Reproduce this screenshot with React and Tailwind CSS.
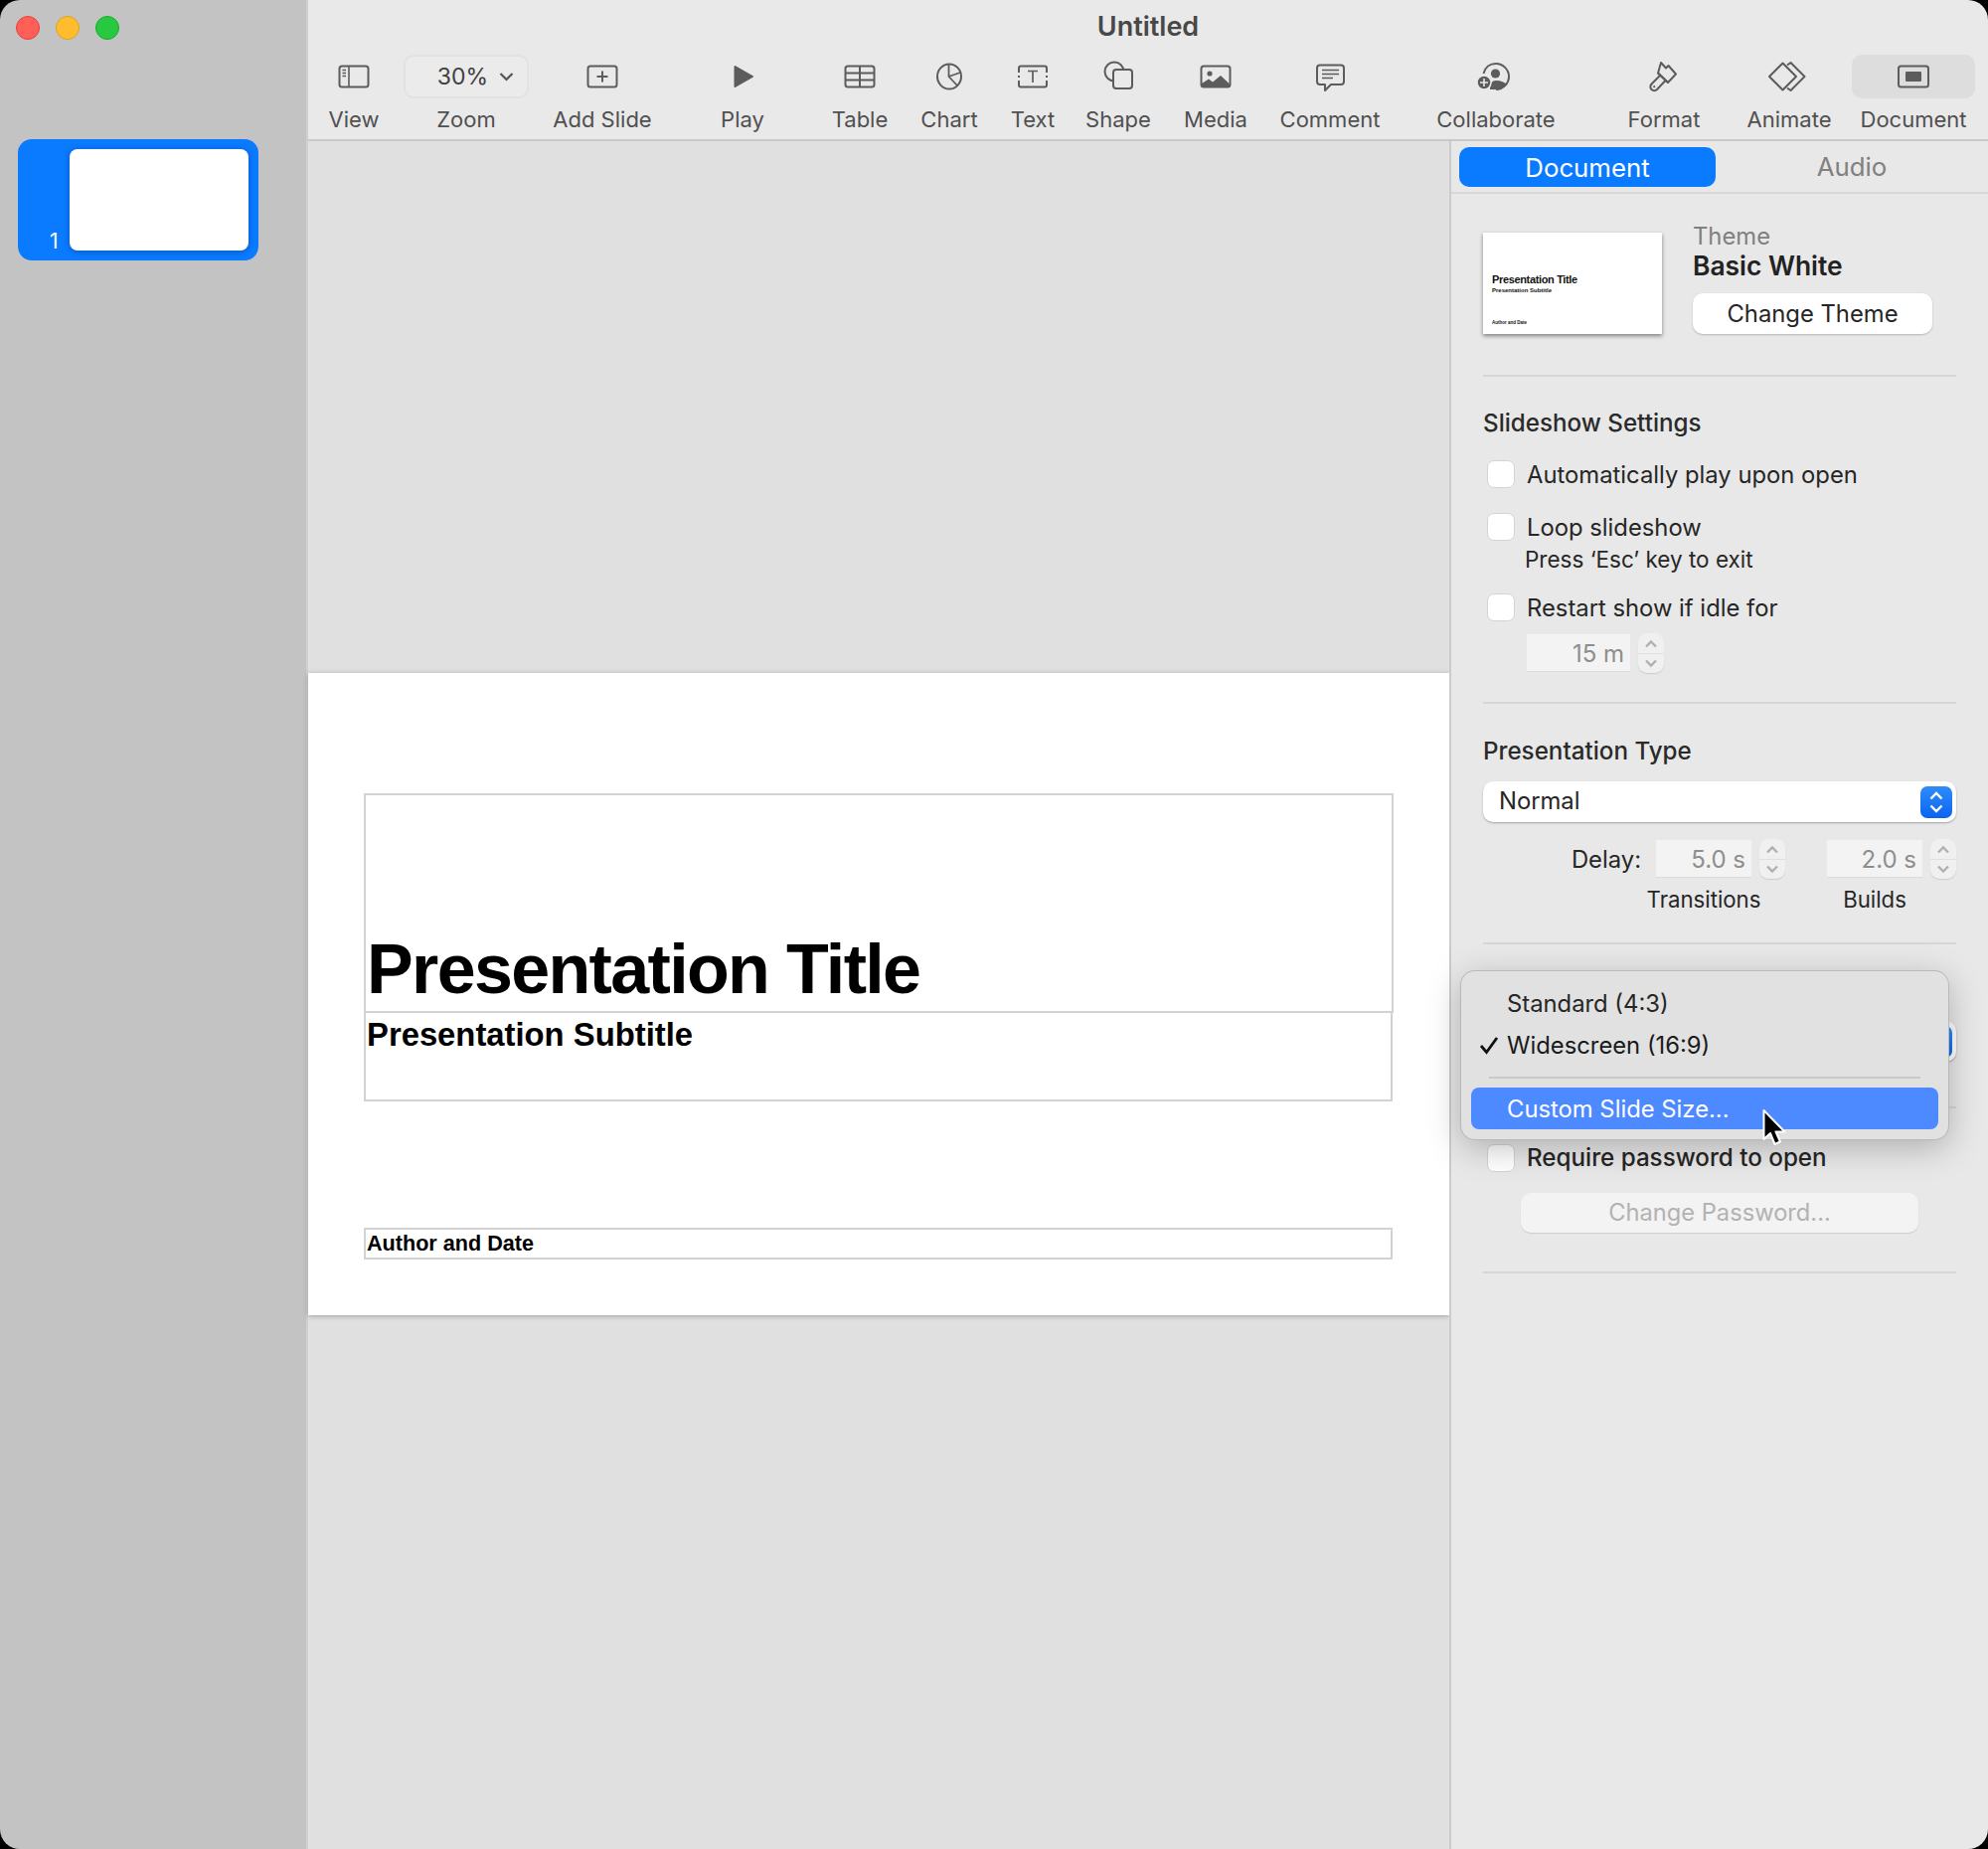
const ICON = '#5c5c5c';

const Rect = (props) => <rect x="7.5" y="11.5" width="29" height="21" rx="2.5" fill="none" stroke={ICON} strokeWidth="2" {...props} />;

const icons = {
  view: (
    <>
      <Rect />
      <path d="M17 11.5V32.5M10.5 15.5H14M10.5 18.5H14M10.5 21.5H14" stroke={ICON} strokeWidth="1.6" />
    </>
  ),
  add: (
    <>
      <Rect />
      <path d="M22 16.5V27.5M16.5 22H27.5" stroke={ICON} strokeWidth="2" />
    </>
  ),
  play: <path d="M14.5 12L32 22L14.5 32Z" fill={ICON} stroke={ICON} strokeWidth="2" strokeLinejoin="round" />,
  table: (
    <>
      <Rect />
      <path d="M7.5 18.5H36.5M7.5 25.5H36.5M22 11.5V32.5" stroke={ICON} strokeWidth="2" />
    </>
  ),
  chart: (
    <>
      <ellipse cx="22" cy="22" rx="12" ry="12.5" fill="none" stroke={ICON} strokeWidth="2" />
      <path d="M21.5 10V22L30 31M21.5 22L33 18" fill="none" stroke={ICON} strokeWidth="1.8" />
    </>
  ),
  text: (
    <>
      <path d="M8 18V13.5Q8 11.5 10 11.5H34Q36 11.5 36 13.5V18M8 26V30.5Q8 32.5 10 32.5H34Q36 32.5 36 30.5V26M8 21V23M36 21V23" fill="none" stroke={ICON} strokeWidth="2" />
      <path d="M17 16.5H27M22 16.5V28" fill="none" stroke={ICON} strokeWidth="1.7" />
    </>
  ),
  shape: (
    <>
      <circle cx="18" cy="17" r="9.5" fill="none" stroke={ICON} strokeWidth="2" />
      <rect x="17" y="15" width="19" height="19" rx="3" fill="#e9e9e9" stroke={ICON} strokeWidth="2" />
    </>
  ),
  media: (
    <>
      <rect x="7.5" y="11.5" width="29" height="21" rx="2.5" fill="none" stroke={ICON} strokeWidth="2" />
      <circle cx="16" cy="19" r="2.6" fill={ICON} />
      <path d="M8 31V29L15 24.5L19 27.5L27 21L36 29.5V32H8Z" fill={ICON} />
    </>
  ),
  comment: (
    <>
      <path d="M12 10.5H33Q36 10.5 36 13.5V27Q36 30 33 30H23L17 36V30H12Q9 30 9 27V13.5Q9 10.5 12 10.5Z" fill="none" stroke={ICON} strokeWidth="2" strokeLinejoin="round" />
      <path d="M14 15.5H31M14 19.5H31M14 23.5H25" stroke={ICON} strokeWidth="1.6" />
    </>
  ),
  collaborate: (
    <>
      <path d="M9.5 19C11 12.5 16 9 22 9C29 9 35 15 35 22C35 29 29 35 22 35" fill="none" stroke={ICON} strokeWidth="2" />
      <circle cx="21.5" cy="19" r="4.6" fill={ICON} />
      <path d="M16 35C16 29 18 26 22 26C27 26 31 28 33 30C30 34 26 35 22 35Z" fill={ICON} />
      <circle cx="10" cy="28" r="7" fill={ICON} stroke="#e9e9e9" strokeWidth="1.5" />
      <path d="M10 24V32M6 28H14" stroke="#e9e9e9" strokeWidth="1.6" />
    </>
  ),
  format: (
    <>
      <path d="M19 8L24 13.5L26.5 11L34 19.5L26 28L16 18.5Z" fill="none" stroke={ICON} strokeWidth="2" strokeLinejoin="round" />
      <path d="M18 21L9.5 29.5A3.8 3.8 0 1 0 15 35L23.5 26M16 18.5L26 28" fill="none" stroke={ICON} strokeWidth="2" />
      <circle cx="12.2" cy="32.2" r="1.1" fill={ICON} />
    </>
  ),
  animate: (
    <>
      <path d="M15.5 8.5L29 22L15.5 35.5L2 22Z" fill="none" stroke={ICON} strokeWidth="2" strokeLinejoin="round" />
      <path d="M20 10.5L23.5 8L37.5 22L23.5 36L20 33.5" fill="none" stroke={ICON} strokeWidth="2" strokeLinejoin="round" />
    </>
  ),
  document: (
    <>
      <Rect x="7" width="30" />
      <rect x="14" y="17" width="16" height="10" rx="1" fill={ICON} />
    </>
  ),
};

const toolbar = [
  { label: 'View', icon: 'view', width: 'w-[92px]' },
  { label: 'Zoom', zoom: true, width: 'w-[134px]' },
  { label: 'Add Slide', icon: 'add', width: 'w-[140px]' },
  { label: 'Play', icon: 'play', width: 'w-[142px]' },
  { label: 'Table', icon: 'table', width: 'w-[94px]' },
  { label: 'Chart', icon: 'chart', width: 'w-[86px]' },
  { label: 'Text', icon: 'text', width: 'w-[82px]' },
  { label: 'Shape', icon: 'shape', width: 'w-[90px]' },
  { label: 'Media', icon: 'media', width: 'w-[106px]' },
  { label: 'Comment', icon: 'comment', width: 'w-[124px]' },
  { label: 'Collaborate', icon: 'collaborate', width: 'w-[210px]' },
  { label: 'Format', icon: 'format', width: 'w-[128px]' },
  { label: 'Animate', icon: 'animate', width: 'w-[124px]' },
  { label: 'Document', icon: 'document', width: 'w-[126px]', active: true },
];

const ToolbarItem = ({ item }) => (
  <div className={`${item.width} flex shrink-0 flex-col items-center`}>
    {item.zoom ? (
      <div className="flex h-[44px] w-[126px] items-center justify-end rounded-[10px] border-2 border-[#e2e2e2] bg-[#ebebeb] pr-[13px]">
        <span className="text-[23px] text-[#404040]">30%</span>
        <svg className="ml-[11px]" width="15" height="10" viewBox="0 0 15 10">
          <path d="M1.5 2L7.5 8L13.5 2" fill="none" stroke="#555555" strokeWidth="2.2" />
        </svg>
      </div>
    ) : (
      <div className={`flex h-[44px] items-center justify-center rounded-[10px] ${item.active ? 'w-[124px] bg-[#dddddd]' : 'w-[44px]'}`}>
        <svg width="44" height="44" viewBox="0 0 44 44">{icons[item.icon]}</svg>
      </div>
    )}
    <span className="mt-[7px] whitespace-nowrap text-[22px] leading-[28px] text-[#505050]">{item.label}</span>
  </div>
);

const Divider = ({ className = '' }) => <div className={`h-[2px] bg-[#d6d6d6] ${className}`} />;

const Heading = ({ children, className = '' }) => (
  <div className={`h-[30px] text-[24.2px] font-medium leading-[30px] text-[#2a2a2a] ${className}`}>{children}</div>
);

const Check = ({ children, className = '', strong }) => (
  <div className={`flex h-[28px] items-center pl-[4px] ${className}`}>
    <span className="h-[28px] w-[28px] shrink-0 rounded-[7px] border border-[#d4d4d4] bg-white" />
    <span className={`ml-[12px] whitespace-nowrap pt-[1px] ${strong ? 'text-[24.2px] font-medium' : 'text-[23.8px]'} text-[#262626]`}>{children}</span>
  </div>
);

const Stepper = () => (
  <div className="ml-[8px] flex h-[40px] w-[26px] shrink-0 flex-col items-center justify-center rounded-[9px] bg-[#f0f0f0] shadow-[0_1px_1px_rgba(0,0,0,0.12)]">
    <svg width="14" height="19" viewBox="0 0 14 19">
      <path d="M2 12.5L7 7.5L12 12.5" fill="none" stroke="#b0b0b0" strokeWidth="2.4" />
    </svg>
    <div className="h-[1px] w-full bg-[#e0e0e0]" />
    <svg width="14" height="19" viewBox="0 0 14 19">
      <path d="M2 6.5L7 11.5L12 6.5" fill="none" stroke="#b0b0b0" strokeWidth="2.4" />
    </svg>
  </div>
);

const Field = ({ value, width }) => (
  <div className={`flex h-[38px] ${width} shrink-0 items-center justify-end border-b border-[#dcdcdc] bg-[#f3f3f3] pr-[6px] pt-[2px] text-[24px] text-[#8e8e8e]`}>
    {value}
  </div>
);

const Select = ({ label, className = '' }) => (
  <div className={`flex h-[41px] items-center justify-between rounded-[10px] bg-white pl-[16px] pr-[4px] shadow-[0_1px_2px_rgba(0,0,0,0.3)] ${className}`}>
    <span className="-mt-[1px] text-[23.8px] text-[#262626]">{label}</span>
    <span className="flex h-[32px] w-[32px] items-center justify-center rounded-[7px] bg-gradient-to-b from-[#2f8bfb] to-[#0a63f0]">
      <svg width="16" height="26" viewBox="0 0 16 26">
        <path d="M2.5 9.5L8 4L13.5 9.5M2.5 16.5L8 22L13.5 16.5" fill="none" stroke="white" strokeWidth="2.4" />
      </svg>
    </span>
  </div>
);

const SlideSizeMenu = () => (
  <div className="absolute left-[1470px] top-[977px] w-[490px] rounded-[14px] bg-[#e1e1e1] pb-[10px] pt-[11px] shadow-[0_0_0_1px_#b9b9b9,0_8px_34px_rgba(0,0,0,0.26)]">
    <div className="flex h-[42px] items-center pl-[46px] pt-[2px] text-[23.8px] text-[#262626]">Standard (4:3)</div>
    <div className="relative flex h-[42px] items-center pl-[46px] pt-[2px] text-[23.8px] text-[#1a1a1a]">
      <svg className="absolute left-[18px] top-[12px]" width="20" height="19" viewBox="0 0 20 19">
        <path d="M2 10L7.5 16.5L18 2" fill="none" stroke="#111111" strokeWidth="2.8" />
      </svg>
      Widescreen (16:9)
    </div>
    <div className="mx-[28px] mt-[11px] h-[2px] bg-[#c9c9c9]" />
    <div className="mx-[10px] mt-[9px] flex h-[42px] items-center rounded-[8px] bg-[#4d89ff] pl-[36px] pt-[2px] text-[23.8px] text-white">
      Custom Slide Size...
    </div>
  </div>
);

const Cursor = () => (
  <svg className="absolute left-[1772px] top-[1115px]" width="28" height="40" viewBox="0 0 28 40">
    <path d="M2.5 2V31L9 25L13.5 36L19 33.5L14.5 23.5H23.5Z" fill="#000000" stroke="#ffffff" strokeWidth="2" strokeLinejoin="round" />
  </svg>
);

const Inspector = () => (
  <aside className="flex w-[542px] shrink-0 flex-col border-l-2 border-[#cbcbcb] bg-[#e8e8e8]">
    <div className="flex h-[53px] shrink-0 border-b-2 border-[#d8d8d8]">
      <div className="ml-[8px] mt-[6px] flex h-[40px] w-[258px] items-center justify-center rounded-[10px] bg-[#0a7aff] pt-[2px] text-[25.8px] text-white">
        Document
      </div>
      <div className="flex flex-1 items-center justify-center pt-[2px] text-[25.8px] text-[#808080]">Audio</div>
    </div>

    <div className="px-[32px]">
      <div className="mt-[28px] flex items-start">
        <div className="mt-[11px] flex h-[102px] w-[180px] shrink-0 flex-col bg-white pl-[9px] pt-[42px] font-['Liberation_Sans',sans-serif] font-bold leading-none text-[#111111] shadow-[0_2px_4px_rgba(0,0,0,0.45)]">
          <span className="text-[11px] tracking-[-0.35px]">Presentation Title</span>
          <span className="mt-[2px] text-[6px]">Presentation Subtitle</span>
          <span className="mt-[28px] text-[4.5px]">Author and Date</span>
        </div>
        <div className="ml-[31px] flex flex-col">
          <span className="h-[30px] text-[23.8px] leading-[30px] text-[#808080]">Theme</span>
          <span className="-mt-[1px] h-[30px] text-[26.4px] font-semibold leading-[30px] text-[#222222]">Basic White</span>
          <div className="mt-[13px] flex h-[41px] w-[241px] items-center justify-center rounded-[10px] bg-white text-[23.8px] text-[#262626] shadow-[0_1px_2px_rgba(0,0,0,0.22)]">
            Change Theme
          </div>
        </div>
      </div>
      <Divider className="mt-[41px]" />

      <Heading className="mt-[32px]">Slideshow Settings</Heading>
      <Check className="mt-[22px]">Automatically play upon open</Check>
      <Check className="mt-[25px]">Loop slideshow</Check>
      <div className="mt-[5px] h-[28px] pl-[42px] text-[22.5px] leading-[28px] text-[#262626]">Press ‘Esc’ key to exit</div>
      <Check className="mt-[20px]">Restart show if idle for</Check>
      <div className="mt-[12px] flex items-center pl-[44px]">
        <Field value="15 m" width="w-[104px]" />
        <Stepper />
      </div>
      <Divider className="mt-[29px]" />

      <Heading className="mt-[33px]">Presentation Type</Heading>
      <Select label="Normal" className="mt-[15px]" />
      <div className="mt-[17px] flex items-center justify-end">
        <span className="mr-[15px] pt-[1px] text-[23.8px] text-[#262626]">Delay:</span>
        <Field value="5.0 s" width="w-[96px]" />
        <Stepper />
        <div className="w-[42px] shrink-0" />
        <Field value="2.0 s" width="w-[96px]" />
        <Stepper />
      </div>
      <div className="mt-[7px] flex h-[28px] items-center justify-end text-[22.2px] text-[#262626]">
        <div className="flex w-[96px] justify-center whitespace-nowrap">Transitions</div>
        <div className="w-[76px] shrink-0" />
        <div className="flex w-[96px] justify-center">Builds</div>
        <div className="w-[34px] shrink-0" />
      </div>
      <Divider className="mt-[29px]" />

      {/* slide size heading and value sit behind the open menu */}
      <Heading className="mt-[20px]" />
      <Select className="mt-[27px]" />
      <Divider className="mt-[45px]" />

      <Check className="mt-[36px]" strong>Require password to open</Check>
      <div className="ml-[38px] mt-[21px] flex h-[40px] w-[400px] items-center justify-center rounded-[10px] bg-[#f3f3f3] text-[23.7px] text-[#b2b2b2] shadow-[0_1px_1px_rgba(0,0,0,0.12)]">
        Change Password...
      </div>
      <Divider className="mt-[39px]" />
    </div>
  </aside>
);

const Slide = () => (
  <div className="flex h-[646px] w-full flex-col bg-white px-[56px] pt-[121px] font-['Liberation_Sans',sans-serif] font-bold text-black shadow-[0_1px_5px_rgba(0,0,0,0.28)]">
    <div className="flex h-[221px] shrink-0 items-end border-2 border-[#d2d2d2] pb-[2px] pl-[1px] text-[70px] leading-[80px] tracking-[-1.65px]">
      Presentation Title
    </div>
    <div className="-mt-[2px] mr-[1px] h-[91px] shrink-0 border-2 border-[#d2d2d2] pl-[1px] text-[32.8px] leading-[44px]">
      Presentation Subtitle
    </div>
    <div className="mr-[1px] mt-[127px] flex h-[32px] shrink-0 items-center border-2 border-[#d2d2d2] pl-[1px] text-[21.6px]">
      Author and Date
    </div>
  </div>
);

const App = () => (
  <div className="h-[1860px] w-[2000px] bg-black">
    <div className="relative flex h-full overflow-hidden rounded-[20px] font-['Inter',sans-serif]">
      <nav className="w-[310px] shrink-0 border-r-2 border-[#d0d0d0] bg-[#c3c3c3]">
        <div className="flex gap-[16px] pl-[16px] pt-[16px]">
          <span className="h-[24px] w-[24px] rounded-full border border-[#e0443e] bg-[#ff5f57]" />
          <span className="h-[24px] w-[24px] rounded-full border border-[#dea123] bg-[#febc2e]" />
          <span className="h-[24px] w-[24px] rounded-full border border-[#1aab29] bg-[#28c840]" />
        </div>
        <div className="ml-[18px] mt-[100px] flex h-[122px] w-[242px] rounded-[14px] bg-[#0a7aff] pr-[9px] pt-[10px]">
          <span className="ml-[32px] mt-[80px] h-[26px] w-[20px] text-[21px] leading-[26px] text-white">1</span>
          <div className="h-[102px] w-[180px] rounded-[8px] bg-white shadow-[0_1px_6px_rgba(0,0,40,0.3)]" />
        </div>
      </nav>

      <main className="flex min-w-0 flex-1 flex-col">
        <header className="h-[142px] shrink-0 border-b-2 border-[#c9c9c9] bg-[#e9e9e9]">
          <div className="h-[55px] pt-[11px] text-center text-[27px] font-semibold leading-[32px] text-[#484848]">Untitled</div>
          <div className="flex">
            {toolbar.map((item) => (
              <ToolbarItem key={item.label} item={item} />
            ))}
          </div>
        </header>

        <div className="flex min-h-0 flex-1">
          <div className="flex min-w-0 flex-1 items-center bg-[#e0e0e0] pb-[2px]">
            <Slide />
          </div>
          <Inspector />
        </div>
      </main>

      <SlideSizeMenu />
      <Cursor />
    </div>
  </div>
);

export default App;
